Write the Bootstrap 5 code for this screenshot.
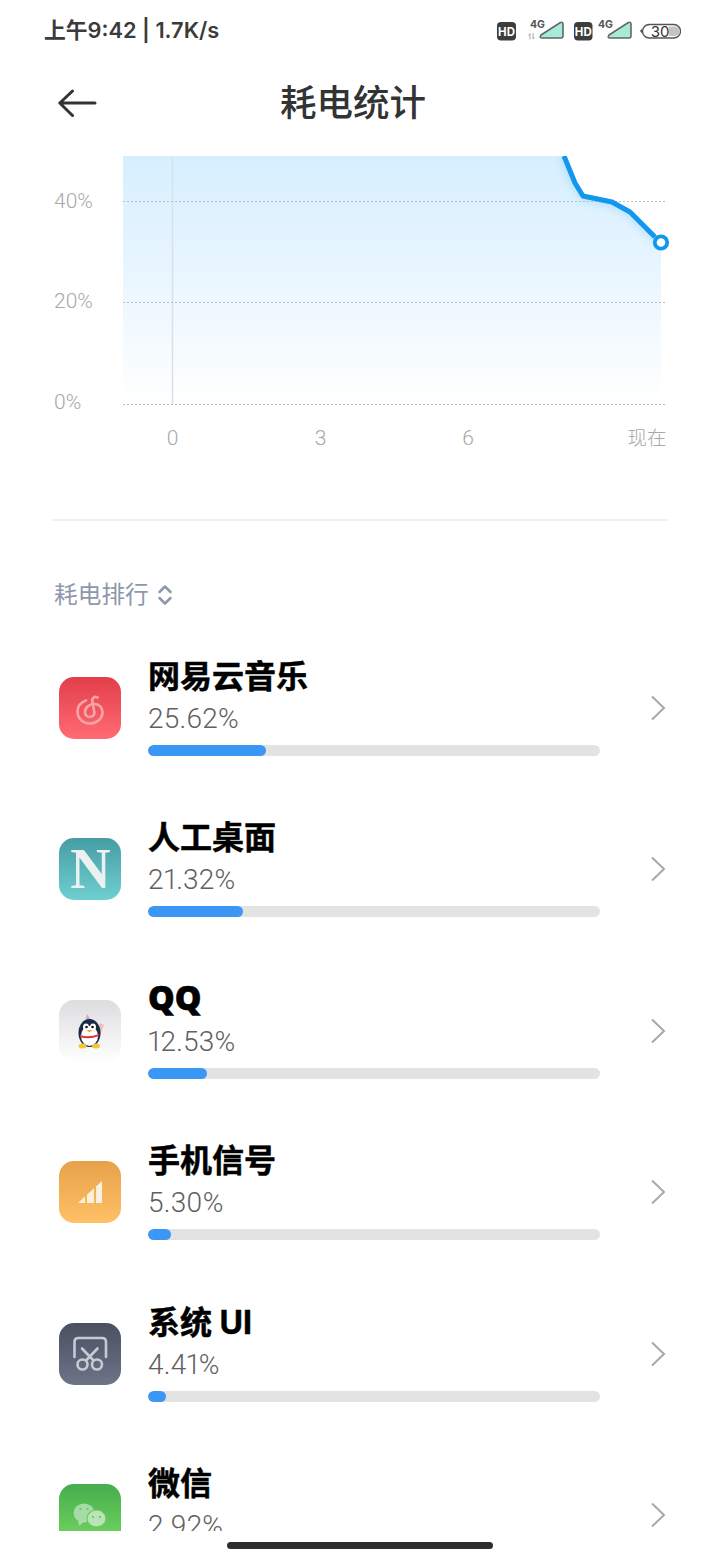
<!DOCTYPE html>
<html lang="zh"><head><meta charset="utf-8"><title>耗电统计</title>
<link href="https://cdn.jsdelivr.net/npm/bootstrap@5.3.0/dist/css/bootstrap.min.css" rel="stylesheet">
<style>
html,body{height:1560px;overflow:hidden;background:#fff}
body{font-family:"Inter","Noto Sans CJK SC",sans-serif;width:720px;position:relative}
.status-row{height:60px;padding:0 39px 0 44px;color:#3b3b3b}
.status-time{font-size:21.8px;font-weight:600;line-height:1;padding-top:2px;white-space:nowrap}
.head-row{height:96px;position:relative;padding-right:14px;padding-bottom:10px}
.back-link{position:absolute;left:58px;top:28px;line-height:0}
.page-title{font-size:36.5px;font-weight:500;color:#333;margin:0;line-height:1}
.chart-box{height:304px;line-height:0}
.rule-line{margin:59px 53px 0 53px;height:2px;background:#eeeeee}
.sort-row{padding:58px 0 0 54px;height:106px;color:#8e97ab;font-size:23.7px;line-height:32px}
.sort-inner{gap:8px}
.app-list{height:904px;overflow:hidden;padding-left:59px;padding-right:54px}
.app-row{height:161.5px;gap:27px}
.app-icon{width:62px;height:62px;border-radius:15px;flex:none;overflow:hidden;line-height:0}
.app-body{width:452px}
.app-name{font-size:32px;font-weight:700;color:#000;line-height:38px;height:38px;margin-top:-2px;white-space:nowrap;-webkit-text-stroke:.5px #000}
.name-wide{display:block;line-height:32px;font-family:"Open Sans",sans-serif;font-size:33.5px;font-weight:800;-webkit-text-stroke:.6px #000}
.app-pct{font-family:"Roboto","Noto Sans CJK SC",sans-serif;font-size:28px;letter-spacing:.2px;font-variant-numeric:proportional-nums;color:#606060;line-height:32px;height:42px;margin-top:7px;font-weight:300}
.app-track{height:11px;border-radius:6px;background:#e3e3e3;overflow:hidden}
.app-fill{height:100%;border-radius:6px;background:#3a97f5}
.app-chev{margin-left:auto;line-height:0;flex:none}
.home-pill{position:absolute;left:227px;top:1542px;width:266px;height:7px;border-radius:4px;background:#2e2e2e}
</style></head><body>
<div class="status-row d-flex align-items-center justify-content-between">
 <div class="status-time">上午9:42 | 1.7K/s</div>
 <svg width="186" height="24" viewBox="0 0 186 24" font-family="Inter,sans-serif">
  <rect x="2" y="4" width="19" height="18.500" rx="4" fill="#3d3d3d"/><text x="11.500" y="17.500" font-size="11.500" font-weight="700" fill="#fff" text-anchor="middle">HD</text>
  <text x="35" y="10" font-size="10.500" font-weight="700" fill="#555">4G</text>
  <path d="M35 15.500v6M33.500 17.500l1.500-2M38 15v6M39.500 19l-1.500 2" stroke="#aaa" stroke-width="1" fill="none"/>
  <path d="M46 17 65 4.800q3-1.500 3 1.500V18q0 2-2 2H47q-3 0-1-3z" fill="#a5ebd8" stroke="#666" stroke-width="1.600"/>
  <rect x="79" y="4" width="18.500" height="18.500" rx="4" fill="#3d3d3d"/><text x="88.300" y="17.500" font-size="11.500" font-weight="700" fill="#fff" text-anchor="middle">HD</text>
  <text x="103" y="10" font-size="10.500" font-weight="700" fill="#555">4G</text>
  <path d="M114 17 133 4.800q3-1.500 3 1.500V18q0 2-2 2H115q-3 0-1-3z" fill="#a5ebd8" stroke="#666" stroke-width="1.600"/>
  <path d="M145 13l2-2.500v5z" fill="#555"/>
  <rect x="147.500" y="6.500" width="38" height="13.500" rx="6.700" fill="#fff" stroke="#555" stroke-width="1.400"/>
  <path d="M174 8.500h6a4.700 4.700 0 0 1 0 9.500h-6z" fill="#c4c4c4"/>
  <text x="165" y="18.500" font-size="15" fill="#333" text-anchor="middle">30</text>
 </svg>
</div>
<div class="head-row d-flex align-items-center justify-content-center">
 <a class="back-link" aria-label="返回"><svg width="40" height="30" viewBox="0 0 40 30" fill="none" stroke="#333" stroke-width="3" stroke-linecap="round" stroke-linejoin="round"><path d="M2 15H37M14.500 3 1.800 15 14.500 27.500"/></svg></a>
 <h1 class="page-title">耗电统计</h1>
</div>
<div class="chart-box">
<svg width="720" height="304" viewBox="0 156 720 304" font-family="Roboto,'Noto Sans CJK SC',sans-serif" font-size="21" font-weight="300" fill="#a8a8a8">
 <defs>
  <linearGradient id="gA" x1="0" y1="0" x2="0" y2="1"><stop offset="0" stop-color="#d6efff"/><stop offset=".5" stop-color="#eaf6ff"/><stop offset="1" stop-color="#fff"/></linearGradient>
  <filter id="blurA" x="-30%" y="-60%" width="160%" height="220%"><feGaussianBlur stdDeviation="4"/></filter>
  <clipPath id="cpA"><path d="M123 156H564L575 183 583 196 612 202 630 212 661 242V404H123z"/></clipPath>
 </defs>
 <path d="M123 156H564L575 183 583 196 612 202 630 212 661 242V404H123z" fill="url(#gA)"/>
 <g clip-path="url(#cpA)"><path d="M564 156 575 183 583 196 612 202 630 212 661 242" fill="none" stroke="#b4e0fb" stroke-width="9" filter="url(#blurA)"/></g>
 <path d="M172.500 156V404" stroke="#d6e1e9" stroke-width="1.500"/>
 <g stroke="#bdbdbd" stroke-width="1" stroke-dasharray="2 2"><path d="M123 201.500H666M123 302.500H666M123 404.500H666"/></g>
 <path d="M564 156 575 183 583 196 612 202 630 212 655 237" fill="none" stroke="#1197ee" stroke-width="5" stroke-linejoin="round"/>
 <circle cx="661" cy="242.500" r="6.200" fill="#fff" stroke="#1197ee" stroke-width="3.800"/>
 <text x="54" y="207.500">40%</text><text x="54" y="308">20%</text><text x="54" y="408.500">0%</text>
 <text x="172.500" y="445" text-anchor="middle">0</text><text x="320.500" y="445" text-anchor="middle">3</text><text x="468" y="445" text-anchor="middle">6</text><text x="666.500" y="445" text-anchor="end" font-size="19.500">现在</text>
</svg>
</div>
<div class="rule-line"></div>
<div class="sort-row">
 <div class="sort-inner d-flex align-items-center">
 <span>耗电排行</span>
 <svg width="16" height="22" viewBox="0 0 16 22" fill="none" stroke="#8e97ab" stroke-width="2.500" stroke-linecap="round" stroke-linejoin="round"><path d="M2.500 8 8 2.500 13.500 8M2.500 14 8 19.500 13.500 14"/></svg>
 </div>
</div>
<div class="app-list">
 <div class="app-row d-flex align-items-center">
  <div class="app-icon"><svg width="62" height="62" viewBox="0 0 62 62"><defs><linearGradient id="i1" x1="0" y1="0" x2="0" y2="1"><stop offset="0" stop-color="#e23e49"/><stop offset="1" stop-color="#ff6b74"/></linearGradient></defs><rect width="62" height="62" fill="url(#i1)"/><path d="M27 23.500C21.500 25.500 18.500 29.500 18.500 34.500 18.500 41.500 24 46.500 31 46.500 38 46.500 43.500 41.500 43.500 35 43.500 30 39.500 27 35.500 27 31 27 26 30 26 35 26 38 28.200 40 31 40 34 40 35.800 37.500 35.300 35L33.300 24C32.800 21 35.500 19 38.500 20.500" fill="none" stroke="#f6a3a6" stroke-width="2.700" stroke-linecap="round"/></svg></div>
  <div class="app-body"><div class="app-name">网易云音乐</div><div class="app-pct">25.62%</div><div class="app-track"><div class="app-fill" style="width:26%"></div></div></div>
  <div class="app-chev"><svg width="16" height="26" viewBox="0 0 16 26" fill="none" stroke="#a8a8a8" stroke-width="2"><path d="M2 1.500 14 13 2 24.500"/></svg></div>
 </div>
 <div class="app-row d-flex align-items-center">
  <div class="app-icon"><svg width="62" height="62" viewBox="0 0 62 62" font-family="'Liberation Serif',serif"><defs><linearGradient id="i2" x1="0" y1="0" x2="0" y2="1"><stop offset="0" stop-color="#459da4"/><stop offset="1" stop-color="#6fcfd0"/></linearGradient></defs><rect width="62" height="62" fill="url(#i2)"/><text x="31.500" y="50" font-size="56" font-weight="700" fill="#eaf1ef" text-anchor="middle">N</text></svg></div>
  <div class="app-body"><div class="app-name">人工桌面</div><div class="app-pct">21.32%</div><div class="app-track"><div class="app-fill" style="width:21%"></div></div></div>
  <div class="app-chev"><svg width="16" height="26" viewBox="0 0 16 26" fill="none" stroke="#a8a8a8" stroke-width="2"><path d="M2 1.500 14 13 2 24.500"/></svg></div>
 </div>
 <div class="app-row d-flex align-items-center">
  <div class="app-icon"><svg width="62" height="62" viewBox="0 0 62 62"><defs><linearGradient id="i3" x1="0" y1="0" x2="0" y2="1"><stop offset="0" stop-color="#dddde0"/><stop offset="1" stop-color="#fff"/></linearGradient></defs><rect width="62" height="62" fill="url(#i3)"/><path d="M26 21l2-7 4 6z" fill="#dca8bb"/><path d="M38 33l3-10 4 2-4 10z" fill="#f2bcbc"/><ellipse cx="30.500" cy="33" rx="11" ry="14" fill="#1a2b45"/><ellipse cx="30.500" cy="36" rx="8.500" ry="10" fill="#fff"/><ellipse cx="27" cy="27" rx="3" ry="3.500" fill="#fff"/><ellipse cx="34" cy="27" rx="3" ry="3.500" fill="#fff"/><circle cx="27.500" cy="27" r="1.300" fill="#111"/><circle cx="33.500" cy="27" r="1.300" fill="#111"/><path d="M27.500 30h6l-3 2.500z" fill="#f0a820"/><path d="M21 35q9 3 19-1v2q-10 4-19 1z" fill="#d9363b"/><ellipse cx="23.500" cy="46" rx="4" ry="2.500" fill="#f3c730"/><ellipse cx="37" cy="46" rx="4" ry="2.500" fill="#f3c730"/></svg></div>
  <div class="app-body"><div class="app-name"><span class="name-wide">QQ</span></div><div class="app-pct">12.53%</div><div class="app-track"><div class="app-fill" style="width:13%"></div></div></div>
  <div class="app-chev"><svg width="16" height="26" viewBox="0 0 16 26" fill="none" stroke="#a8a8a8" stroke-width="2"><path d="M2 1.500 14 13 2 24.500"/></svg></div>
 </div>
 <div class="app-row d-flex align-items-center">
  <div class="app-icon"><svg width="62" height="62" viewBox="0 0 62 62"><defs><linearGradient id="i4" x1="0" y1="0" x2="0" y2="1"><stop offset="0" stop-color="#e6a24a"/><stop offset="1" stop-color="#ffc066"/></linearGradient></defs><rect width="62" height="62" fill="url(#i4)"/><g fill="#fdf0dc"><path d="M19 42 26 35.600V42z"/><path d="M28 33.800 35 27.300V42H28z"/><path d="M37 25.500 43 20V42H37z"/></g></svg></div>
  <div class="app-body"><div class="app-name">手机信号</div><div class="app-pct">5.30%</div><div class="app-track"><div class="app-fill" style="width:5%"></div></div></div>
  <div class="app-chev"><svg width="16" height="26" viewBox="0 0 16 26" fill="none" stroke="#a8a8a8" stroke-width="2"><path d="M2 1.500 14 13 2 24.500"/></svg></div>
 </div>
 <div class="app-row d-flex align-items-center">
  <div class="app-icon"><svg width="62" height="62" viewBox="0 0 62 62"><defs><linearGradient id="i5" x1="0" y1="0" x2="0" y2="1"><stop offset="0" stop-color="#4a5062"/><stop offset="1" stop-color="#6e7488"/></linearGradient></defs><rect width="62" height="62" fill="url(#i5)"/><g fill="none" stroke="#c8cad2" stroke-width="2.600" stroke-linecap="round"><path d="M15.500 34V19q0-4 4-4H43q4 0 4 4V34"/><path d="M23 25.500 34.500 37.500M38.500 25.500 27 37.500"/><circle cx="23.500" cy="41.500" r="5"/><circle cx="38" cy="41.500" r="5"/></g></svg></div>
  <div class="app-body"><div class="app-name">系统 UI</div><div class="app-pct">4.41%</div><div class="app-track"><div class="app-fill" style="width:4%"></div></div></div>
  <div class="app-chev"><svg width="16" height="26" viewBox="0 0 16 26" fill="none" stroke="#a8a8a8" stroke-width="2"><path d="M2 1.500 14 13 2 24.500"/></svg></div>
 </div>
 <div class="app-row d-flex align-items-center">
  <div class="app-icon"><svg width="62" height="62" viewBox="0 0 62 62"><defs><linearGradient id="i6" x1="0" y1="0" x2="0" y2="1"><stop offset="0" stop-color="#46ad4e"/><stop offset="1" stop-color="#74d85f"/></linearGradient></defs><rect width="62" height="62" fill="url(#i6)"/><ellipse cx="25" cy="29" rx="10.500" ry="9.500" fill="#a5dca5"/><path d="M19 36l1 6 5-4z" fill="#a5dca5"/><ellipse cx="37.500" cy="34.500" rx="9.500" ry="8.500" fill="#b9e5b5" stroke="#6fc566" stroke-width="1.200"/><g fill="#74b870"><circle cx="34" cy="33" r="1.100"/><circle cx="41" cy="33" r="1.100"/><circle cx="21.500" cy="25" r="1.100"/><circle cx="28.500" cy="25" r="1.100"/></g></svg></div>
  <div class="app-body"><div class="app-name">微信</div><div class="app-pct">2.92%</div><div class="app-track"><div class="app-fill" style="width:3%"></div></div></div>
  <div class="app-chev"><svg width="16" height="26" viewBox="0 0 16 26" fill="none" stroke="#a8a8a8" stroke-width="2"><path d="M2 1.500 14 13 2 24.500"/></svg></div>
 </div>
</div>
<div class="home-pill"></div>
<script src="https://cdn.jsdelivr.net/npm/bootstrap@5.3.0/dist/js/bootstrap.bundle.min.js"></script>
</body></html>
